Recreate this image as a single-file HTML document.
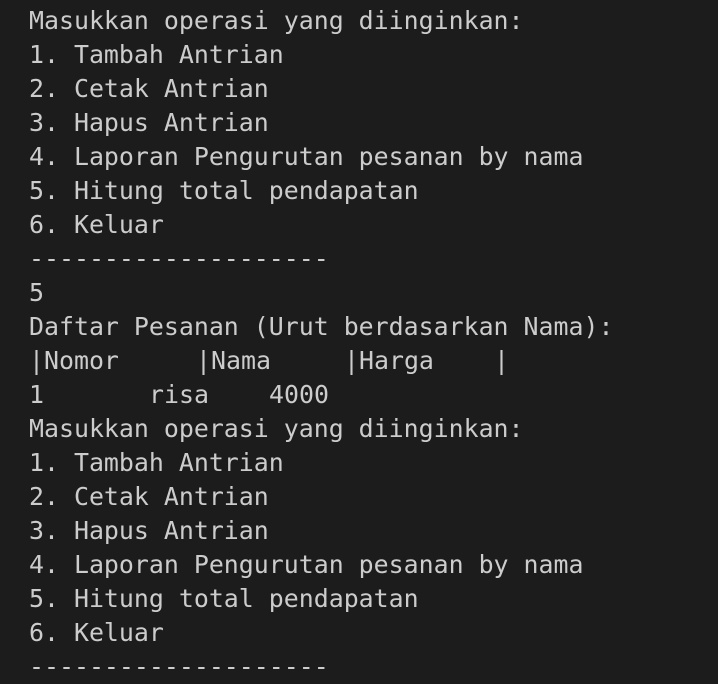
<!DOCTYPE html>
<html><head><meta charset="utf-8"><style>
html,body{margin:0;padding:0;background:#1c1c1c;width:718px;height:676px;overflow:hidden}
.t,.a{position:absolute;font-family:"DejaVu Sans Mono","Liberation Mono",monospace;font-size:24.9px;line-height:34px;color:#cccccc;white-space:pre}
.t{left:29px}
</style></head><body>
<div class="t" style="top:4px">Masukkan operasi yang diinginkan:
1. Tambah Antrian
2. Cetak Antrian
3. Hapus Antrian
4. Laporan Pengurutan pesanan by nama
5. Hitung total pendapatan
6. Keluar
--------------------
5
Daftar Pesanan (Urut berdasarkan Nama):</div>
<div class="a" style="top:344px;left:29px">|Nomor</div>
<div class="a" style="top:344px;left:196px">|Nama</div>
<div class="a" style="top:344px;left:344px">|Harga</div>
<div class="a" style="top:344px;left:494px">|</div>
<div class="a" style="top:378px;left:29px">1</div>
<div class="a" style="top:378px;left:149px">risa</div>
<div class="a" style="top:378px;left:269px">4000</div>
<div class="t" style="top:412px">Masukkan operasi yang diinginkan:
1. Tambah Antrian
2. Cetak Antrian
3. Hapus Antrian
4. Laporan Pengurutan pesanan by nama
5. Hitung total pendapatan
6. Keluar
--------------------</div>
</body></html>
